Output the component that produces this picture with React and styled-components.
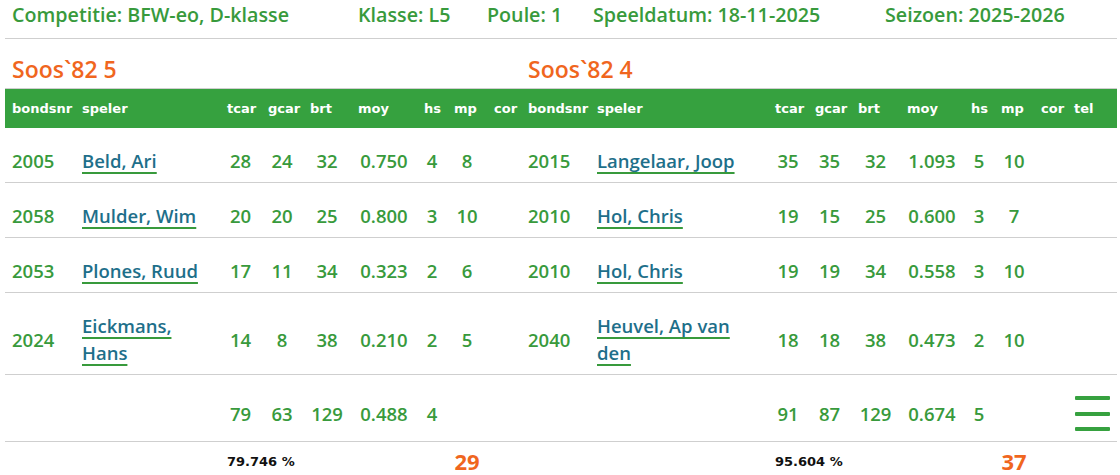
import React from 'react';
import styled, { createGlobalStyle } from 'styled-components';

const GREEN = '#389a3c';
const BAR = '#36a13f';
const ORANGE = '#f0661e';
const TEAL = '#1e6f8a';
const LINE = '#cfcfcf';

const COLS = '70px 145px 41px 42px 48px 66px 30px 40px 34px 69px 178px 40px 43px 49px 64px 30px 40px 33px 50px';

const GlobalStyle = createGlobalStyle`
    body {
        margin: 0;
        background: #fff;
        font-family: "Open Sans", "Noto Sans", sans-serif;
    }
`;

const Page = styled.div`
    width: 1112px;
    padding-left: 5px;
`;

const TitleBar = styled.div`
    display: grid;
    grid-template-columns: 346px 129px 106px 292px 239px;
    padding: 2px 0 10px;
    border-bottom: 1px solid ${LINE};
    color: ${GREEN};
    font-size: 19.7px;
    font-weight: 600;
    line-height: 26px;
`;

const TitleItem = styled.div`
    padding-left: 7px;
    white-space: nowrap;
`;

const TeamRow = styled.div`
    display: grid;
    grid-template-columns: 516px 596px;
    padding: 17px 0 5px;
    border-bottom: 1px solid ${LINE};
    color: ${ORANGE};
    font-size: 23px;
    font-weight: 600;
    line-height: 27px;
`;

const TeamName = styled.div`
    padding-left: 7px;
`;

const Row = styled.div`
    display: grid;
    grid-template-columns: ${COLS};
    align-items: center;
`;

const HeadRow = styled(Row)`
    height: 39px;
    background: ${BAR};
    color: #fff;
    font-family: "DejaVu Sans", Verdana, sans-serif;
    font-weight: bold;
    font-size: 13px;
`;

const HeadCell = styled.div`
    padding-left: 7px;
    white-space: nowrap;
`;

const DataRow = styled(Row)`
    padding: ${p => p.$pad || '19px 0 8px'};
    border-bottom: ${p => (p.$last ? 'none' : `1px solid ${LINE}`)};
    color: ${GREEN};
    font-size: 18.5px;
    font-weight: 600;
    line-height: 27px;
`;

const Cell = styled.div`
    padding-left: ${p => (p.$left ? '7px' : '0')};
    text-align: ${p => (p.$left ? 'left' : 'center')};
    white-space: nowrap;
`;

const NameCell = styled.div`
    padding-left: 7px;
    max-width: ${p => p.$max}px;
`;

const NameLink = styled.a`
    color: ${TEAL};
    text-decoration: underline;
    text-decoration-color: ${GREEN};
    text-decoration-thickness: 2px;
    text-underline-offset: 4px;
    cursor: pointer;
`;

const Percent = styled.div`
    grid-column: ${p => p.$col} / span 3;
    padding-left: 7px;
    color: #111;
    font-family: "DejaVu Sans", Verdana, sans-serif;
    font-weight: bold;
    font-size: 13px;
    white-space: nowrap;
`;

const Points = styled.div`
    grid-column: ${p => p.$col};
    text-align: center;
    color: ${ORANGE};
    font-weight: bold;
    font-size: 22px;
    line-height: 28px;
`;

const MenuButton = styled.div`
    grid-column: 19;
    justify-self: center;
    display: flex;
    flex-direction: column;
    justify-content: space-between;
    width: 35px;
    height: 35px;
    cursor: pointer;
`;

const MenuBar = styled.span`
    display: block;
    height: 4px;
    border-radius: 1px;
    background: ${BAR};
`;

const headers = ['bondsnr', 'speler', 'tcar', 'gcar', 'brt', 'moy', 'hs', 'mp', 'cor'];

const games = [
    {
        home: ['2005', 'Beld, Ari', '28', '24', '32', '0.750', '4', '8'],
        away: ['2015', 'Langelaar, Joop', '35', '35', '32', '1.093', '5', '10'],
    },
    {
        home: ['2058', 'Mulder, Wim', '20', '20', '25', '0.800', '3', '10'],
        away: ['2010', 'Hol, Chris', '19', '15', '25', '0.600', '3', '7'],
    },
    {
        home: ['2053', 'Plones, Ruud', '17', '11', '34', '0.323', '2', '6'],
        away: ['2010', 'Hol, Chris', '19', '19', '34', '0.558', '3', '10'],
    },
    {
        home: ['2024', 'Eickmans, Hans', '14', '8', '38', '0.210', '2', '5'],
        away: ['2040', 'Heuvel, Ap van den', '18', '18', '38', '0.473', '2', '10'],
    },
];

function PlayerCells({ data, nameMax, extra }) {
    const [nr, name, ...nums] = data;
    return (
        <>
            <Cell $left>{nr}</Cell>
            <NameCell $max={nameMax}>
                <NameLink>{name}</NameLink>
            </NameCell>
            {nums.map((n, i) => (
                <Cell key={i}>{n}</Cell>
            ))}
            {Array.from({ length: extra }).map((_, i) => (
                <Cell key={'e' + i} />
            ))}
        </>
    );
}

function App() {
    return (
        <Page>
            <GlobalStyle />
            <TitleBar>
                <TitleItem>Competitie: BFW-eo, D-klasse</TitleItem>
                <TitleItem>Klasse: L5</TitleItem>
                <TitleItem>Poule: 1</TitleItem>
                <TitleItem>Speeldatum: 18-11-2025</TitleItem>
                <TitleItem>Seizoen: 2025-2026</TitleItem>
            </TitleBar>

            <TeamRow>
                <TeamName>Soos`82 5</TeamName>
                <TeamName>Soos`82 4</TeamName>
            </TeamRow>

            <HeadRow>
                {headers.map(h => (
                    <HeadCell key={'l' + h}>{h}</HeadCell>
                ))}
                {[...headers, 'tel'].map(h => (
                    <HeadCell key={'r' + h}>{h}</HeadCell>
                ))}
            </HeadRow>

            {games.map((g, i) => (
                <DataRow key={i}>
                    <PlayerCells data={g.home} nameMax={135} extra={1} />
                    <PlayerCells data={g.away} nameMax={165} extra={2} />
                </DataRow>
            ))}

            <DataRow $pad="21px 0 10px">
                <Cell />
                <Cell />
                <Cell>79</Cell>
                <Cell>63</Cell>
                <Cell>129</Cell>
                <Cell>0.488</Cell>
                <Cell>4</Cell>
                <Cell />
                <Cell />
                <Cell />
                <Cell />
                <Cell>91</Cell>
                <Cell>87</Cell>
                <Cell>129</Cell>
                <Cell>0.674</Cell>
                <Cell>5</Cell>
                <Cell />
                <Cell />
                <MenuButton>
                    <MenuBar />
                    <MenuBar />
                    <MenuBar />
                </MenuButton>
            </DataRow>

            <DataRow $pad="5px 0 6px" $last>
                <Percent $col={3}>79.746 %</Percent>
                <Points $col={8}>29</Points>
                <Percent $col={12}>95.604 %</Percent>
                <Points $col={17}>37</Points>
            </DataRow>
        </Page>
    );
}

export default App;
